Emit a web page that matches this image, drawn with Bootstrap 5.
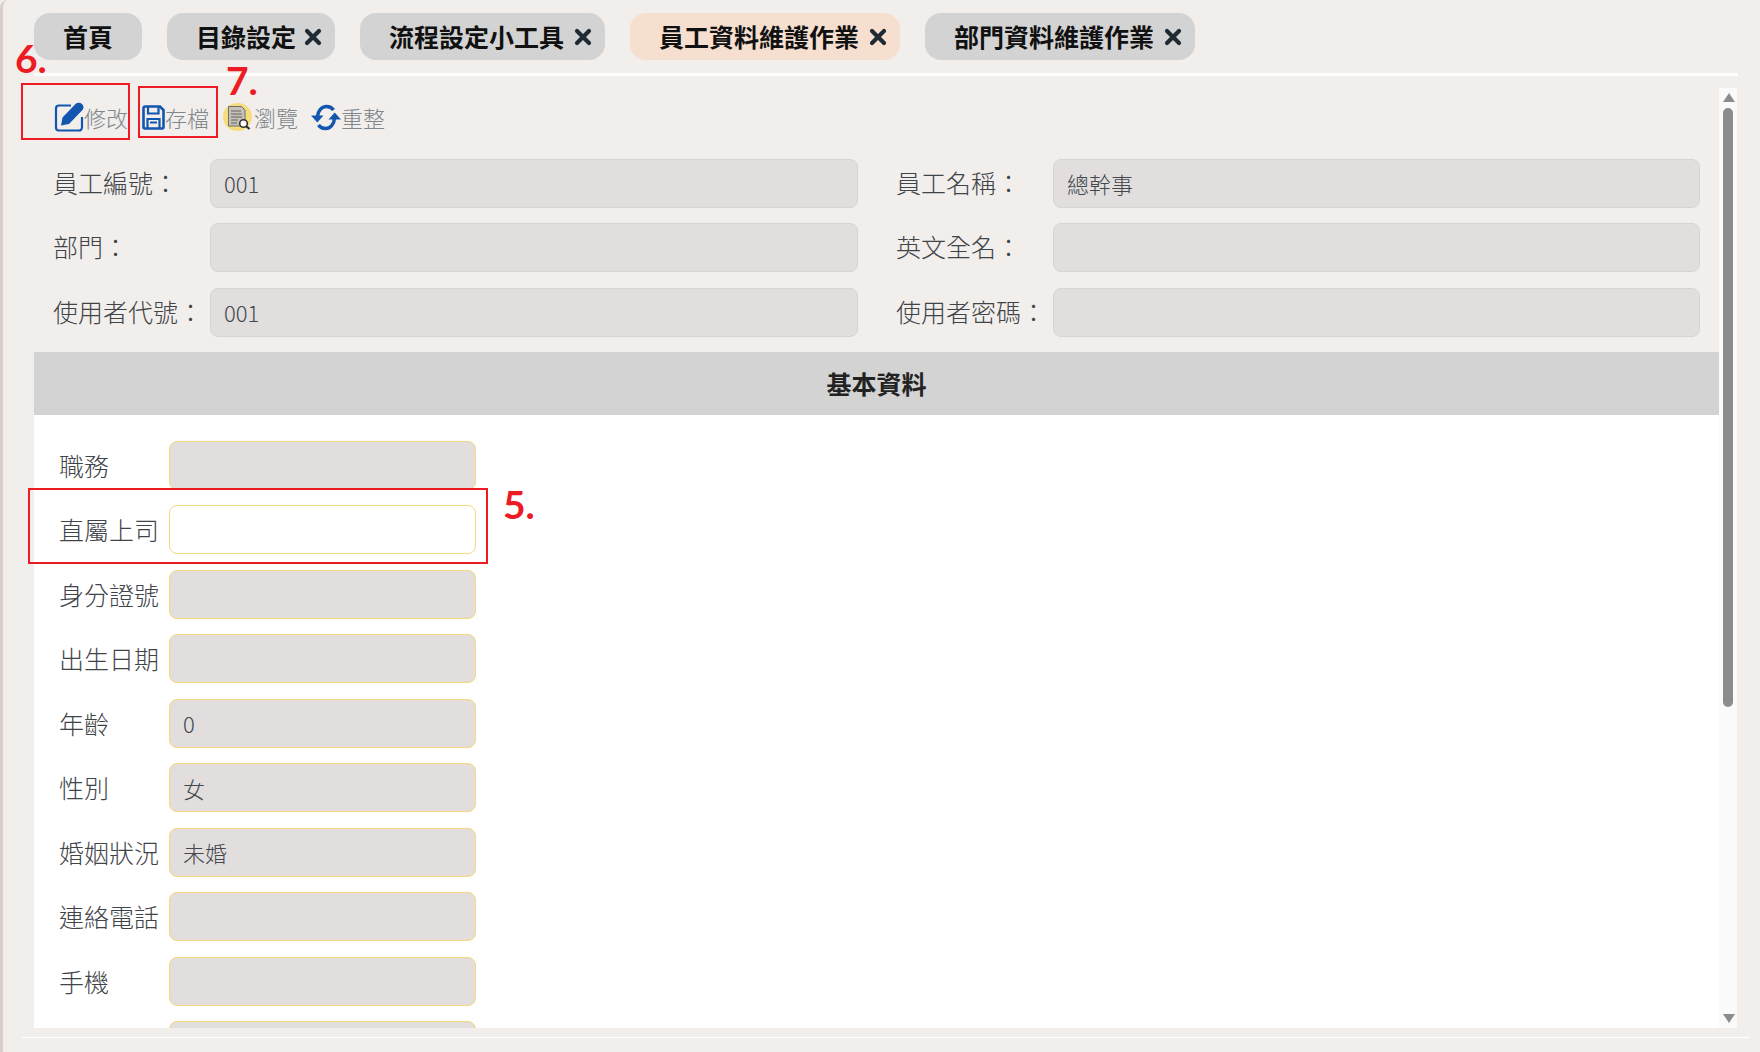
<!DOCTYPE html>
<html lang="zh-Hant">
<head>
    <meta charset="utf-8">
    <title>員工資料維護作業</title>
    <meta name="viewport" content="width=device-width, initial-scale=1">
    <link href="https://cdn.jsdelivr.net/npm/bootstrap@5.3.0/dist/css/bootstrap.min.css" rel="stylesheet">
    <script src="https://cdn.jsdelivr.net/npm/bootstrap@5.3.0/dist/js/bootstrap.bundle.min.js"></script>
    <style>
        html, body {
            height: 100%;
            overflow: hidden;
        }
        body {
            background-color: #f1eeeb;
            font-family: "Noto Sans CJK TC", "Noto Sans", sans-serif;
        }
        .app-shell {
            position: relative;
            height: 1052px;
            border-left: 3px solid #d8cfcc;
            border-top-left-radius: 8px;
        }
        /* tabs */
        .tab-bar {
            padding: 13px 0 0 31px;
            gap: 25px;
        }
        .tab-item {
            height: 47px;
            padding: 0 13px 0 29px;
            gap: 8px;
            border-radius: 16px;
            background: #d3d3d3;
            color: #111;
            font-size: 25px;
            font-weight: 700;
            line-height: 1;
        }
        .tab-item.tab-home { padding: 0 29px; }
        .tab-item.tab-wide { gap: 10px; }
        .tab-item.tab-on { background: #f6dfcf; }
        .tab-close { width: 18px; height: 18px; }
        .top-rule {
            height: 3px;
            margin: 13px 22px 12px 31px;
            background: #fff;
        }
        /* scroll area */
        .work-area {
            height: 940px;
            margin-left: 31px;
            margin-right: 23px;
        }
        .work-content {
            flex: 1 1 auto;
            min-width: 0;
            overflow: hidden;
        }
        .fake-scroll {
            width: 18px;
            flex: none;
            background: #fafafa;
        }
        .scroll-up, .scroll-down {
            width: 0;
            height: 0;
            margin-left: 4px;
            border-left: 6px solid transparent;
            border-right: 6px solid transparent;
        }
        .scroll-up { margin-top: 5px; border-bottom: 9px solid #8c8c8c; }
        .scroll-down { position: absolute; bottom: 5px; left: 0; border-top: 9px solid #8c8c8c; }
        .scroll-thumb {
            width: 10px;
            height: 599px;
            margin: 6px 0 0 4px;
            background: #8c8c8c;
            border-radius: 5px;
        }
        .bottom-rule {
            height: 1px;
            margin: 9px 10px 0 19px;
            background: #fff;
        }
        /* toolbar */
        .tool-bar {
            height: 58px;
            padding-left: 20px;
            font-size: 22px;
            font-weight: 300;
            color: #7f868c;
        }
        .tool-btn { line-height: 1; }
        .tool-edit { width: 31px; margin-right: -1px; }
        .tool-save { width: 23px; margin-left: 14px; }
        .tool-view { width: 29px; margin-left: 14px; margin-right: 2px; }
        .tool-sync { width: 30px; margin-left: 13px; }
        .tool-bar svg { display: block; flex: none; }
        /* forms */
        .head-rows { padding: 13px 0 0 19px; }
        .head-row { height: 48px; margin-bottom: 16.5px; }
        .head-row .field-name { padding-bottom: 2px; font-size: 25px; font-weight: 300; color: #3f4449; line-height: 1; white-space: nowrap; }
        .name-a { width: 157px; margin-right: 0; }
        .name-b { width: 157px; margin-left: 38px; }
        .box-a { width: 648px !important; }
        .box-b { width: 647px !important; }
        .form-control.field-box {
            height: 49px;
            padding: 0 13px;
            background: #e1dedd;
            border: 1px solid #d5d5d8;
            border-radius: 8px;
            font-size: 22px;
            font-weight: 300;
            color: #43484d;
            box-shadow: none;
        }
        .form-control.field-y {
            width: 307px;
            border-color: #f5d97a;
        }
        .form-control.field-w { background: #fff; }
        .section-head {
            height: 63px;
            margin-top: -0.5px;
            background: #d3d3d3;
            color: #222;
            font-size: 25px;
            font-weight: 700;
        }
        .section-body {
            background: #fff;
            padding: 26px 0 0 25px;
            height: 700px;
        }
        .body-row { height: 48px; margin-bottom: 16.5px; }
        .body-row .field-name {
            width: 110px;
            flex: none;
            font-size: 25px;
            font-weight: 300;
            color: #3f4449;
            line-height: 1;
            white-space: nowrap;
        }
        /* red marks laid over the page */
        .mark-box {
            position: absolute;
            border: 2px solid #ed1c24;
        }
        .mark-num {
            position: absolute;
            color: #ed1c24;
            font-family: Lato, sans-serif;
            font-weight: 700;
            font-size: 39px;
            line-height: 1;
        }
        .box-6 { left: 18px; top: 83px; width: 109px; height: 57px; }
        .box-7 { left: 135px; top: 86px; width: 80px; height: 52px; }
        .box-5 { left: 25px; top: 488px; width: 460px; height: 76px; }
        .num-6 { left: 12px; top: 39px; }
        .num-7 { left: 223px; top: 61px; }
        .num-5 { left: 500px; top: 485px; }
    </style>
</head>
<body>

    <div class="app-shell">
        <!-- Tabs -->
        <div class="tab-bar d-flex">
            <div class="tab-item tab-home d-flex align-items-center">首頁</div>
            <div class="tab-item d-flex align-items-center">目錄設定
                <svg class="tab-close" viewBox="0 0 18 18"><path d="M3 3l12 12M15 3L3 15" stroke="#1f2a33" stroke-width="4.2" stroke-linecap="round"/></svg>
            </div>
            <div class="tab-item tab-wide d-flex align-items-center">流程設定小工具
                <svg class="tab-close" viewBox="0 0 18 18"><path d="M3 3l12 12M15 3L3 15" stroke="#1f2a33" stroke-width="4.2" stroke-linecap="round"/></svg>
            </div>
            <div class="tab-item tab-wide tab-on d-flex align-items-center">員工資料維護作業
                <svg class="tab-close" viewBox="0 0 18 18"><path d="M3 3l12 12M15 3L3 15" stroke="#1f2a33" stroke-width="4.2" stroke-linecap="round"/></svg>
            </div>
            <div class="tab-item tab-wide d-flex align-items-center">部門資料維護作業
                <svg class="tab-close" viewBox="0 0 18 18"><path d="M3 3l12 12M15 3L3 15" stroke="#1f2a33" stroke-width="4.2" stroke-linecap="round"/></svg>
            </div>
        </div>
        <div class="top-rule"></div>

        <div class="work-area d-flex">
            <div class="work-content">
                <!-- Toolbar -->
                <div class="tool-bar d-flex align-items-center">
                    <svg class="tool-edit" width="31" height="30" viewBox="0 0 31 30">
                        <path d="M17 3.500H5a3 3 0 0 0-3 3v19a3 3 0 0 0 3 3h20a3 3 0 0 0 3-3V15" fill="none" stroke="#1256b0" stroke-width="2.200"/>
                        <path d="M7 23.500l1.500-8L21.500 2c1.800-1.800 4.500-1.800 6.500 0s2 4.500 0 6.500L15 22z" fill="#1256b0"/>
                    </svg>
                    <span class="tool-btn">修改</span>
                    <svg class="tool-save" width="23" height="25" viewBox="0 0 23 25">
                        <path d="M3 1.500h15l3.500 3.500v17a1.500 1.500 0 0 1-1.500 1.500H3A1.500 1.500 0 0 1 1.500 22V3A1.500 1.500 0 0 1 3 1.500z" fill="none" stroke="#1256b0" stroke-width="2.600"/>
                        <path d="M6 2v6.500h10.500V2M5.500 23v-9h12v9M8 17.500h7" fill="none" stroke="#1256b0" stroke-width="2.200"/>
                    </svg>
                    <span class="tool-btn">存檔</span>
                    <svg class="tool-view" width="29" height="28" viewBox="0 0 29 28">
                        <ellipse cx="14.500" cy="14" rx="14.500" ry="14" fill="#f5dc7c"/>
                        <path d="M5.500 3.500h13l3.500 3.500v16H5.500z" fill="#c3c1b8" stroke="#6f6e68" stroke-width="1"/>
                        <path d="M8 8h10M8 11h11M8 14h11M8 17h7M8 20h6" stroke="#66655f" stroke-width="1"/>
                        <circle cx="20.500" cy="20.500" r="3.800" fill="#fff" stroke="#333" stroke-width="1.600"/>
                        <path d="M23.300 23.300l3.200 2.700" stroke="#222" stroke-width="2"/>
                    </svg>
                    <span class="tool-btn">瀏覽</span>
                    <svg class="tool-sync" width="30" height="27" viewBox="0 0 30 27">
                        <path d="M6.500 12.500C7 7 10.500 2.500 15.500 2.500c3 0 5.500 1.200 7 3.500" fill="none" stroke="#1256b0" stroke-width="3.400"/>
                        <path d="M23.500 14.500C23 20 19.500 24.500 14.500 24.500c-3 0-5.500-1.200-7-3.500" fill="none" stroke="#1256b0" stroke-width="3.400"/>
                        <path d="M0 11.500h12.500L6.300 18.500z" fill="#1256b0"/>
                        <path d="M30 15.500H17.500L23.700 8.500z" fill="#1256b0"/>
                    </svg>
                    <span class="tool-btn">重整</span>
                </div>

                <!-- Employee header fields -->
                <div class="head-rows">
                    <div class="head-row d-flex align-items-center">
                        <label class="field-name name-a">員工編號：</label>
                        <input class="form-control field-box box-a" value="001" readonly>
                        <label class="field-name name-b">員工名稱：</label>
                        <input class="form-control field-box box-b" value="總幹事" readonly>
                    </div>
                    <div class="head-row d-flex align-items-center">
                        <label class="field-name name-a">部門：</label>
                        <input class="form-control field-box box-a" readonly>
                        <label class="field-name name-b">英文全名：</label>
                        <input class="form-control field-box box-b" readonly>
                    </div>
                    <div class="head-row d-flex align-items-center">
                        <label class="field-name name-a">使用者代號：</label>
                        <input class="form-control field-box box-a" value="001" readonly>
                        <label class="field-name name-b">使用者密碼：</label>
                        <input class="form-control field-box box-b" readonly>
                    </div>
                </div>

                <div class="section-head d-flex align-items-center justify-content-center">基本資料</div>

                <!-- Basic data -->
                <div class="section-body">
                    <div class="body-row d-flex align-items-center">
                        <label class="field-name">職務</label>
                        <input class="form-control field-box field-y" readonly>
                    </div>
                    <div class="body-row d-flex align-items-center">
                        <label class="field-name">直屬上司</label>
                        <input class="form-control field-box field-y field-w">
                    </div>
                    <div class="body-row d-flex align-items-center">
                        <label class="field-name">身分證號</label>
                        <input class="form-control field-box field-y" readonly>
                    </div>
                    <div class="body-row d-flex align-items-center">
                        <label class="field-name">出生日期</label>
                        <input class="form-control field-box field-y" readonly>
                    </div>
                    <div class="body-row d-flex align-items-center">
                        <label class="field-name">年齡</label>
                        <input class="form-control field-box field-y" value="0" readonly>
                    </div>
                    <div class="body-row d-flex align-items-center">
                        <label class="field-name">性別</label>
                        <input class="form-control field-box field-y" value="女" readonly>
                    </div>
                    <div class="body-row d-flex align-items-center">
                        <label class="field-name">婚姻狀況</label>
                        <input class="form-control field-box field-y" value="未婚" readonly>
                    </div>
                    <div class="body-row d-flex align-items-center">
                        <label class="field-name">連絡電話</label>
                        <input class="form-control field-box field-y" readonly>
                    </div>
                    <div class="body-row d-flex align-items-center">
                        <label class="field-name">手機</label>
                        <input class="form-control field-box field-y" readonly>
                    </div>
                    <div class="body-row d-flex align-items-center">
                        <label class="field-name"></label>
                        <input class="form-control field-box field-y" readonly>
                    </div>
                </div>
            </div>

            <!-- Scrollbar -->
            <div class="fake-scroll position-relative">
                <div class="scroll-up"></div>
                <div class="scroll-thumb"></div>
                <div class="scroll-down"></div>
            </div>
        </div>
        <div class="bottom-rule"></div>

        <!-- Red annotations -->
        <div class="mark-box box-6"></div>
        <div class="mark-box box-7"></div>
        <div class="mark-box box-5"></div>
        <div class="mark-num num-6">6.</div>
        <div class="mark-num num-7">7.</div>
        <div class="mark-num num-5">5.</div>
    </div>

</body>
</html>
